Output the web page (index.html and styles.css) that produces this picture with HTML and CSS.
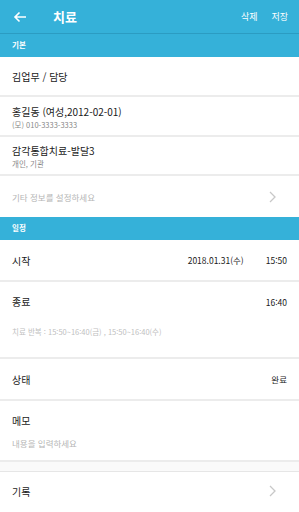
FILE: index.html
```html
<!DOCTYPE html>
<html lang="ko">
<head>
    <meta charset="UTF-8">
    <meta name="viewport" content="width=device-width, initial-scale=1.0">
    <title>치료</title>
    <link rel="stylesheet" href="styles.css">
</head>
<body>
    <header class="app-bar">
        <span class="back">
            <svg width="14" height="12" viewBox="0 0 14 12"><path d="M13 6H2M6.5 1.5L2 6l4.5 4.5" fill="none" stroke="#fff" stroke-width="1.6"/></svg>
        </span>
        <h1 class="title">치료</h1>
        <span class="action">삭제</span>
        <span class="action">저장</span>
    </header>

    <div class="section-bar">기본</div>
    <div class="row single"><span class="label">김업무 / 담당</span></div>
    <div class="row double">
        <span class="label">홍길동 (여성,2012-02-01)</span>
        <span class="sub">(모) 010-3333-3333</span>
    </div>
    <div class="row double">
        <span class="label">감각통합치료-발달3</span>
        <span class="sub">개인, 기관</span>
    </div>
    <div class="row link">
        <span class="placeholder">기타 정보를 설정하세요</span>
        <svg class="chevron" width="7" height="12" viewBox="0 0 7 12"><path d="M1 1l5 5-5 5" fill="none" stroke="#c8c8c8" stroke-width="1.3"/></svg>
    </div>

    <div class="section-bar">일정</div>
    <div class="row line">
        <span class="label">시작</span>
        <span class="value date">2018.01.31(수)</span>
        <span class="value">15:50</span>
    </div>
    <div class="row block end">
        <div class="line-inner">
            <span class="label">종료</span>
            <span class="value">16:40</span>
        </div>
        <span class="repeat">치료 반복 : 15:50~16:40(금) , 15:50~16:40(수)</span>
    </div>
    <div class="row line state">
        <span class="label">상태</span>
        <span class="value">완료</span>
    </div>
    <div class="row block memo">
        <span class="label">메모</span>
        <span class="placeholder">내용을 입력하세요</span>
    </div>
    <div class="spacer"></div>
    <div class="row link record">
        <span class="label">기록</span>
        <svg class="chevron" width="7" height="12" viewBox="0 0 7 12"><path d="M1 1l5 5-5 5" fill="none" stroke="#c8c8c8" stroke-width="1.3"/></svg>
    </div>
</body>
</html>
```

FILE: styles.css
```css
body {
    margin: 0;
    background: #ffffff;
    font-family: "Noto Sans CJK KR", "Noto Sans", sans-serif;
    color: #1a1a1a;
}

.app-bar {
    display: flex;
    align-items: center;
    height: 33px;
    padding: 0 11px 0 13px;
    background-color: #35b1d9;
    border-bottom: 1px solid #2b9cc2;
    color: #ffffff;
}

.back {
    display: flex;
    width: 40px;
}

.title {
    flex: 1;
    margin: 0;
    font-size: 13px;
    font-weight: 700;
}

.action {
    margin-left: 14px;
    font-size: 9px;
}

.section-bar {
    height: 23px;
    line-height: 22px;
    padding-left: 12px;
    background-color: #35b1d9;
    color: #ffffff;
    font-size: 7.5px;
    font-weight: 700;
}

.row {
    display: flex;
    align-items: center;
    padding: 0 12px;
    border-bottom: 2px solid #ececec;
    font-size: 10px;
}

.label {
    font-weight: 400;
}

.single {
    height: 38px;
}

.double {
    flex-direction: column;
    align-items: flex-start;
    justify-content: center;
    height: 40px;
    padding-top: 1px;
    box-sizing: border-box;
}

.double + .double {
    height: 39px;
}

.sub {
    font-size: 7.5px;
    color: #888888;
}

.link {
    justify-content: space-between;
    height: 41px;
    border-bottom: none;
    padding-right: 23px;
}

.placeholder {
    font-size: 8.5px;
    color: #b5b5b5;
}

.line {
    height: 40px;
}

.line .label {
    flex: 1;
}

.value {
    font-size: 8.5px;
}

.date {
    margin-right: 22px;
}

.block {
    flex-direction: column;
    align-items: stretch;
}

.end {
    height: 77px;
    justify-content: flex-start;
    padding-top: 12px;
    box-sizing: border-box;
}

.line-inner {
    display: flex;
    justify-content: space-between;
    align-items: center;
}

.repeat {
    margin-top: 17px;
    font-size: 7.5px;
    color: #c0c0c0;
}

.state {
    height: 40px;
}

.memo {
    height: 61px;
    justify-content: flex-start;
    padding-top: 12px;
    box-sizing: border-box;
}

.memo .placeholder {
    margin-top: 9px;
}

.spacer {
    height: 9px;
    background: #fafafa;
    border-bottom: 1px solid #e6e6e6;
}

.record {
    height: 38px;
}
```
